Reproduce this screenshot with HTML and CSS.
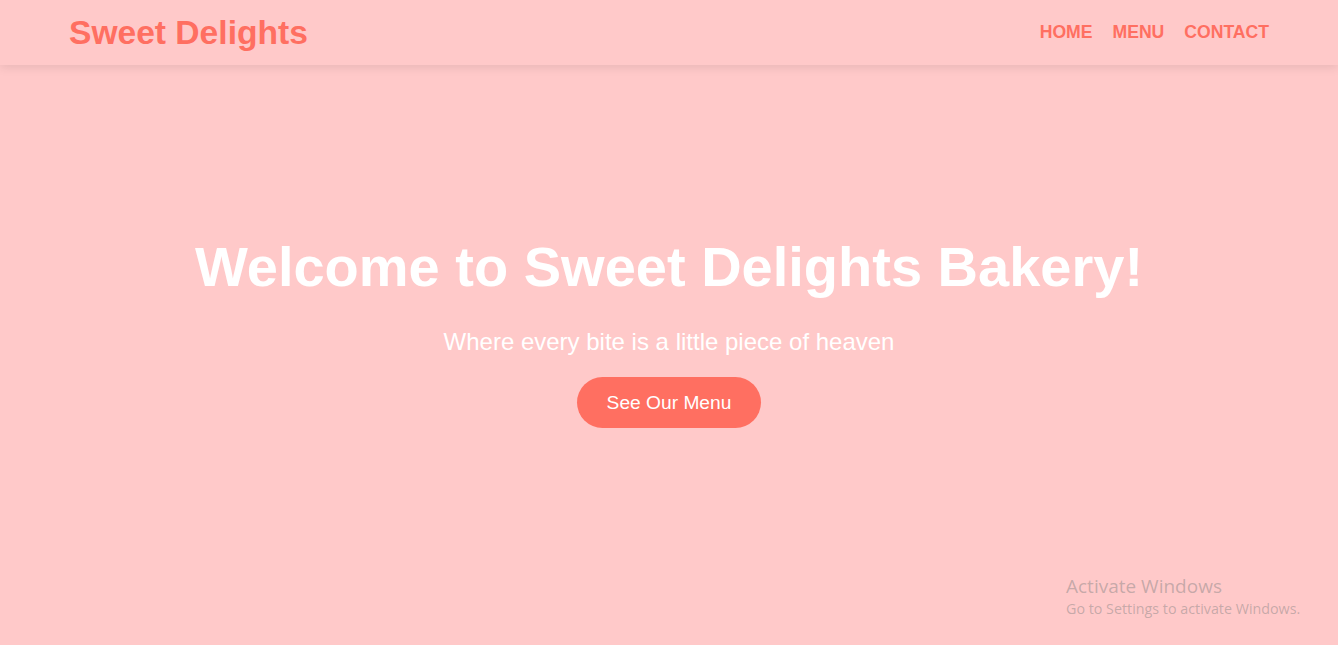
FILE: index.html
```html
<!DOCTYPE html>
<html lang="en">
<head>
<meta charset="utf-8">
<title>Sweet Delights Bakery</title>
<link rel="stylesheet" href="styles.css">
</head>
<body>
<header class="site-header">
  <div class="logo">Sweet Delights</div>
  <nav class="nav">
    <a href="#" class="nav-link">HOME</a>
    <a href="#" class="nav-link">MENU</a>
    <a href="#" class="nav-link">CONTACT</a>
  </nav>
</header>
<main class="hero">
  <h1 class="hero-title">Welcome to Sweet Delights Bakery!</h1>
  <p class="hero-sub">Where every bite is a little piece of heaven</p>
  <a href="#" class="btn">See Our Menu</a>
</main>
<div class="watermark">
  <div class="wm-title">Activate Windows</div>
  <div class="wm-sub">Go to Settings to activate Windows.</div>
</div>
</body>
</html>
```
FILE: styles.css
```css
* { box-sizing: border-box; }
html, body { height: 100%; }
body {
  margin: 0;
  background: #ffc9c9;
  font-family: "Liberation Sans", Arial, sans-serif;
  overflow: hidden;
}
.site-header {
  display: flex;
  justify-content: space-between;
  align-items: center;
  height: 65px;
  padding: 0 69px;
  background: #ffc9c9;
  box-shadow: 0 2px 10px rgba(0, 0, 0, 0.1);
  position: relative;
  z-index: 1;
}
.logo {
  font-size: 2.1rem;
  font-weight: bold;
  color: #ff6f61;
  line-height: 1;
  padding-top: 1px;
}
.nav {
  display: flex;
  gap: 20px;
}
.nav-link {
  font-size: 1.1rem;
  font-weight: bold;
  color: #ff6f61;
  text-decoration: none;
}
.hero {
  height: calc(100% - 65px);
  display: flex;
  flex-direction: column;
  align-items: center;
  justify-content: center;
  padding-bottom: 48px;
  text-align: center;
  color: #fff;
}
.hero-title {
  margin: 0 0 29px;
  font-size: 3.5rem;
  font-weight: bold;
}
.hero-sub {
  margin: 0 0 21px;
  font-size: 1.5rem;
}
.btn {
  display: inline-block;
  padding: 15px 30px;
  background: #ff6f61;
  color: #fff;
  font-size: 1.2rem;
  line-height: 21px;
  border-radius: 30px;
  text-decoration: none;
}
.watermark {
  position: absolute;
  left: 1066px;
  top: 574px;
  color: rgba(128, 128, 128, 0.45);
  font-family: "Open Sans", "Noto Sans", sans-serif;
}
.wm-title {
  font-size: 19px;
  line-height: 25px;
}
.wm-sub {
  font-size: 14.3px;
  line-height: 20px;
}
```
